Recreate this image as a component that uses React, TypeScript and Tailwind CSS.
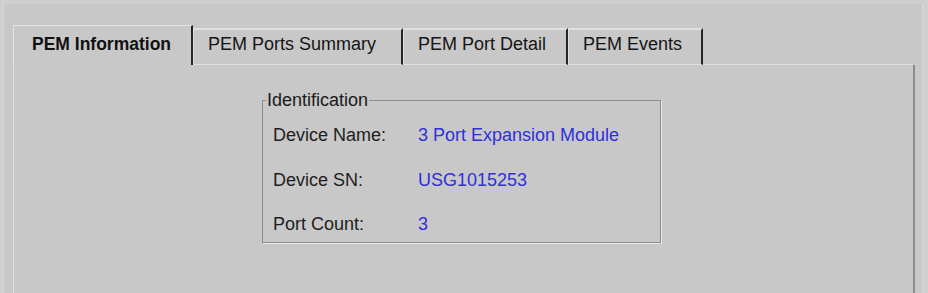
import React from 'react'

type Tab = { label: string; width: string; selected?: boolean }

const tabs: Tab[] = [
  { label: 'PEM Information', width: 'w-[180px]', selected: true },
  { label: 'PEM Ports Summary', width: 'w-[210px]' },
  { label: 'PEM Port Detail', width: 'w-[165px]' },
  { label: 'PEM Events', width: 'w-[135px]' },
]

const rows = [
  { label: 'Device Name:', value: '3 Port Expansion Module' },
  { label: 'Device SN:', value: 'USG1015253' },
  { label: 'Port Count:', value: '3' },
]

const TabButton: React.FC<{ tab: Tab }> = ({ tab }) => {
  if (tab.selected) {
    return (
      <div
        className={`${tab.width} h-[40px] shrink-0 border-t border-l border-[#e4e4e4] border-r-2 border-r-[#262626] pl-[18px] pt-[8px] text-[17.5px] leading-[20px] font-bold text-[#111]`}
      >
        {tab.label}
      </div>
    )
  }
  return (
    <div
      className={`${tab.width} h-[37px] shrink-0 border-t-2 border-l border-b border-[#e0e0e0] border-r-2 border-r-[#262626] pl-[14px] pt-[4px] text-[18px] leading-[20px] text-[#151515]`}
    >
      {tab.label}
    </div>
  )
}

export default function App() {
  return (
    <div
      className="w-[928px] h-[293px] overflow-hidden bg-[#cfcfcf]"
      style={{ fontFamily: '"Liberation Sans", Arial, sans-serif' }}
    >
      <div className="mt-[4px] ml-[3px] w-[920px] h-[289px] bg-[#c8c8c8] border-l border-r border-[#d9d9d9] pl-[9px] pt-[21px] flex flex-col">
        {/* tab strip */}
        <div className="flex items-end w-[902px]">
          {tabs.map((t) => (
            <TabButton key={t.label} tab={t} />
          ))}
          <div className="flex-1 border-b border-[#e0e0e0] mr-[2px]" />
        </div>

        {/* tab content */}
        <div className="w-[902px] flex-1 border-l border-[#e0e0e0] border-r-2 border-r-[#8c8c8c]">
          <fieldset className="ml-[248px] mt-[25px] w-[399px] border border-[#8e8e8e] shadow-[1px_1px_0_#e6e6e6] px-0 pb-[8px]">
            <legend className="ml-[3px] px-[1px] text-[18px] leading-[20px] text-[#1a1a1a]">
              Identification
            </legend>
            <div className="mt-[15px] flex flex-col gap-[24.5px] pl-[10px]">
              {rows.map((r) => (
                <div key={r.label} className="flex h-[20px] text-[18px] leading-[20px]">
                  <span className="w-[145px] text-[#1e1e1e]">{r.label}</span>
                  <span className="text-[#2f2fdc]">{r.value}</span>
                </div>
              ))}
            </div>
          </fieldset>
        </div>
      </div>
    </div>
  )
}
